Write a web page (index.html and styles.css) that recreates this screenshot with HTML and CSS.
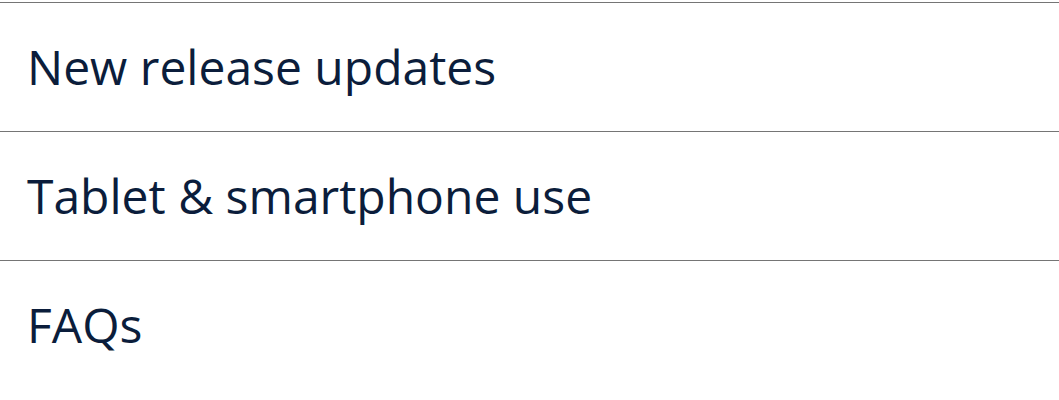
FILE: index.html
```html
<!DOCTYPE html>
<html lang="en">
<head>
<meta charset="utf-8">
<title>Menu</title>
<link rel="stylesheet" href="styles.css">
</head>
<body>
<ul class="menu">
  <li class="menu-item">New release updates</li>
  <li class="menu-item">Tablet &amp; smartphone use</li>
  <li class="menu-item">FAQs</li>
</ul>
</body>
</html>
```

FILE: styles.css
```css
html, body {
  margin: 0;
  padding: 0;
  background: #ffffff;
}
.menu {
  list-style: none;
  margin: 2px 0 0 0;
  padding: 0;
}
.menu-item {
  border-top: 1px solid #757575;
  padding: 32px 27px;
  line-height: 64px;
  font-family: "Open Sans", sans-serif;
  font-size: 48px;
  color: #0b1d3b;
  white-space: nowrap;
}
```
